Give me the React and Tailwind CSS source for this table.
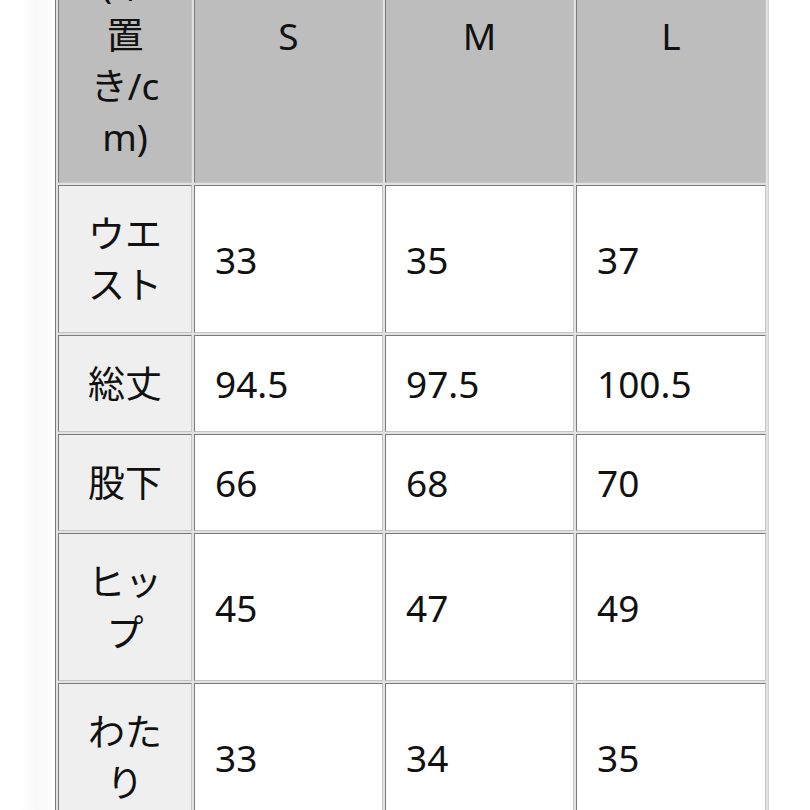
import React from "react";

const rows = [
  { label: ["ウエ", "スト"], values: ["33", "35", "37"] },
  { label: ["総丈"], values: ["94.5", "97.5", "100.5"] },
  { label: ["股下"], values: ["66", "68", "70"] },
  { label: ["ヒッ", "プ"], values: ["45", "47", "49"] },
  { label: ["わた", "り"], values: ["33", "34", "35"] },
];

const cellBorder =
  "border border-t-[#7a7a7a] border-l-[#7a7a7a] border-r-[#c4c4c4] border-b-[#c4c4c4]";

export default function App() {
  return (
    <div
      className="w-[810px] h-[810px] overflow-hidden bg-white flex text-[#111]"
      style={{ fontFamily: '"Noto Sans", "Noto Sans CJK JP", sans-serif' }}
    >
      {/* faint page shadow on the left */}
      <div className="w-[55px] shrink-0 flex">
        <div className="w-[20px]" />
        <div className="w-[32px] bg-gradient-to-r from-white via-[#f8f8f8] to-[#fcfcfc]" />
      </div>

      <div className="-mt-[70px]">
        <table className="table-fixed w-[714px] bg-[#e2e2e2] border-separate border-spacing-[2px] border border-t-[#cfcfcf] border-l-[#7a7a7a] border-r-[#d0d0d0] border-b-[#7a7a7a] text-[37px] leading-[51px]">
          <colgroup>
            <col className="w-[134px]" />
            <col className="w-[189px]" />
            <col className="w-[189px]" />
            <col className="w-[190px]" />
          </colgroup>
          <thead>
            <tr>
              <th className={`${cellBorder} bg-[#bdbdbd] font-normal text-center align-top pt-[24px] pb-[20px]`}>
                (平
                <br />
                置
                <br />
                き/c
                <br />
                m)
              </th>
              {["S", "M", "L"].map((s) => (
                <th
                  key={s}
                  className={`${cellBorder} bg-[#bdbdbd] font-normal text-center align-top pt-[76px]`}
                >
                  {s}
                </th>
              ))}
            </tr>
          </thead>
          <tbody>
            {rows.map((row, i) => (
              <tr key={i}>
                <td className={`${cellBorder} bg-[#efefef] text-center align-middle py-[22px]`}>
                  {row.label.map((line, j) => (
                    <div key={j}>{line}</div>
                  ))}
                </td>
                {row.values.map((v, j) => (
                  <td key={j} className={`${cellBorder} bg-white align-middle pl-5 py-[22px]`}>
                    {v}
                  </td>
                ))}
              </tr>
            ))}
          </tbody>
        </table>
      </div>
    </div>
  );
}
